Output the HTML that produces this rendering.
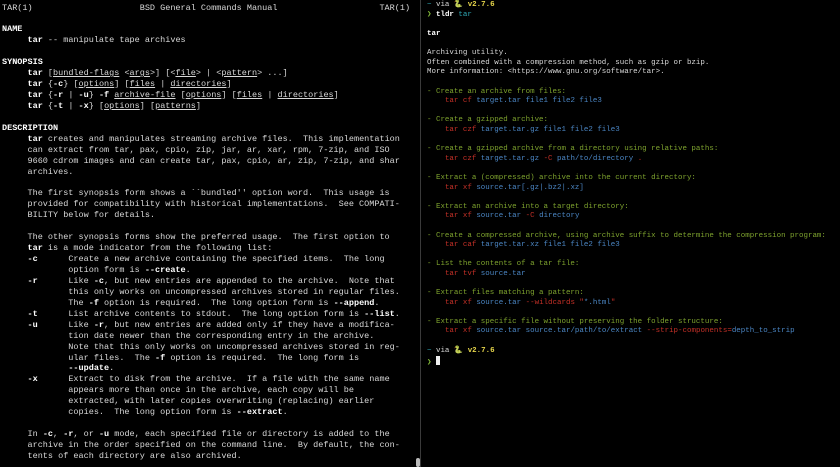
<!DOCTYPE html>
<html><head><meta charset="utf-8"><style>
html,body{margin:0;padding:0;background:#000;width:840px;height:467px;overflow:hidden}
pre{margin:0;font-family:"Liberation Mono","DejaVu Sans Mono",monospace;white-space:pre;color:#d8d8d8}
#l{position:absolute;left:2px;top:2.5px;font-size:8.5px;line-height:10.93px}
#r{position:absolute;left:427px;top:1.3px;font-size:7.47px;line-height:9.6px}
b{color:#fff}
u{text-decoration:underline}
.g{color:#7ea32e}.rd{color:#c43027}.bl{color:#4b86c4}.cy{color:#2fa9b6}.y{color:#e6d54a;font-weight:bold}.gr{color:#87c13b}
#div{position:absolute;left:420px;top:0;width:1px;height:467px;background:#3a3a3a}
#sb{position:absolute;left:416px;top:458px;width:4px;height:9px;background:#bbb;border-radius:2px}
.cur{display:inline-block;width:4.5px;height:9px;background:#eee;vertical-align:-1px}
</style></head><body>
<pre id="l">TAR(1)                     BSD General Commands Manual                    TAR(1)

<b>NAME</b>
     <b>tar</b> -- manipulate tape archives

<b>SYNOPSIS</b>
     <b>tar</b> [<u>bundled-flags</u> &lt;<u>args</u>&gt;] [&lt;<u>file</u>&gt; | &lt;<u>pattern</u>&gt; ...]
     <b>tar</b> {<b>-c</b>} [<u>options</u>] [<u>files</u> | <u>directories</u>]
     <b>tar</b> {<b>-r</b> | <b>-u</b>} <b>-f</b> <u>archive-file</u> [<u>options</u>] [<u>files</u> | <u>directories</u>]
     <b>tar</b> {<b>-t</b> | <b>-x</b>} [<u>options</u>] [<u>patterns</u>]

<b>DESCRIPTION</b>
     <b>tar</b> creates and manipulates streaming archive files.  This implementation
     can extract from tar, pax, cpio, zip, jar, ar, xar, rpm, 7-zip, and ISO
     9660 cdrom images and can create tar, pax, cpio, ar, zip, 7-zip, and shar
     archives.

     The first synopsis form shows a ``bundled'' option word.  This usage is
     provided for compatibility with historical implementations.  See COMPATI-
     BILITY below for details.

     The other synopsis forms show the preferred usage.  The first option to
     <b>tar</b> is a mode indicator from the following list:
     <b>-c</b>      Create a new archive containing the specified items.  The long
             option form is <b>--create</b>.
     <b>-r</b>      Like <b>-c</b>, but new entries are appended to the archive.  Note that
             this only works on uncompressed archives stored in regular files.
             The <b>-f</b> option is required.  The long option form is <b>--append</b>.
     <b>-t</b>      List archive contents to stdout.  The long option form is <b>--list</b>.
     <b>-u</b>      Like <b>-r</b>, but new entries are added only if they have a modifica-
             tion date newer than the corresponding entry in the archive.
             Note that this only works on uncompressed archives stored in reg-
             ular files.  The <b>-f</b> option is required.  The long form is
             <b>--update</b>.
     <b>-x</b>      Extract to disk from the archive.  If a file with the same name
             appears more than once in the archive, each copy will be
             extracted, with later copies overwriting (replacing) earlier
             copies.  The long option form is <b>--extract</b>.

     In <b>-c</b>, <b>-r</b>, or <b>-u</b> mode, each specified file or directory is added to the
     archive in the order specified on the command line.  By default, the con-
     tents of each directory are also archived.</pre>
<div id="div"></div><div id="sb"></div>
<pre id="r"><span class="cy">~</span> via <span class="y">🐍 v2.7.6</span>
<span class="gr">❯</span> <b>tldr</b> <span class="cy">tar</span>

<b>tar</b>

Archiving utility.
Often combined with a compression method, such as gzip or bzip.
More information: &lt;https://www.gnu.org/software/tar&gt;.

<span class="g">- Create an archive from files:</span>
    <span class="rd">tar cf</span> <span class="bl">target.tar file1 file2 file3</span>

<span class="g">- Create a gzipped archive:</span>
    <span class="rd">tar czf</span> <span class="bl">target.tar.gz file1 file2 file3</span>

<span class="g">- Create a gzipped archive from a directory using relative paths:</span>
    <span class="rd">tar czf</span> <span class="bl">target.tar.gz</span> <span class="rd">-C</span> <span class="bl">path/to/directory</span> <span class="rd">.</span>

<span class="g">- Extract a (compressed) archive into the current directory:</span>
    <span class="rd">tar xf</span> <span class="bl">source.tar[.gz|.bz2|.xz]</span>

<span class="g">- Extract an archive into a target directory:</span>
    <span class="rd">tar xf</span> <span class="bl">source.tar</span> <span class="rd">-C</span> <span class="bl">directory</span>

<span class="g">- Create a compressed archive, using archive suffix to determine the compression program:</span>
    <span class="rd">tar caf</span> <span class="bl">target.tar.xz file1 file2 file3</span>

<span class="g">- List the contents of a tar file:</span>
    <span class="rd">tar tvf</span> <span class="bl">source.tar</span>

<span class="g">- Extract files matching a pattern:</span>
    <span class="rd">tar xf</span> <span class="bl">source.tar</span> <span class="rd">--wildcards "</span><span class="bl">*.html</span><span class="rd">"</span>

<span class="g">- Extract a specific file without preserving the folder structure:</span>
    <span class="rd">tar xf</span> <span class="bl">source.tar source.tar/path/to/extract</span> <span class="rd">--strip-components=</span><span class="bl">depth_to_strip</span>

<span class="cy">~</span> via <span class="y">🐍 v2.7.6</span>
<span class="gr">❯</span> <span class="cur"></span></pre>
</body></html>
